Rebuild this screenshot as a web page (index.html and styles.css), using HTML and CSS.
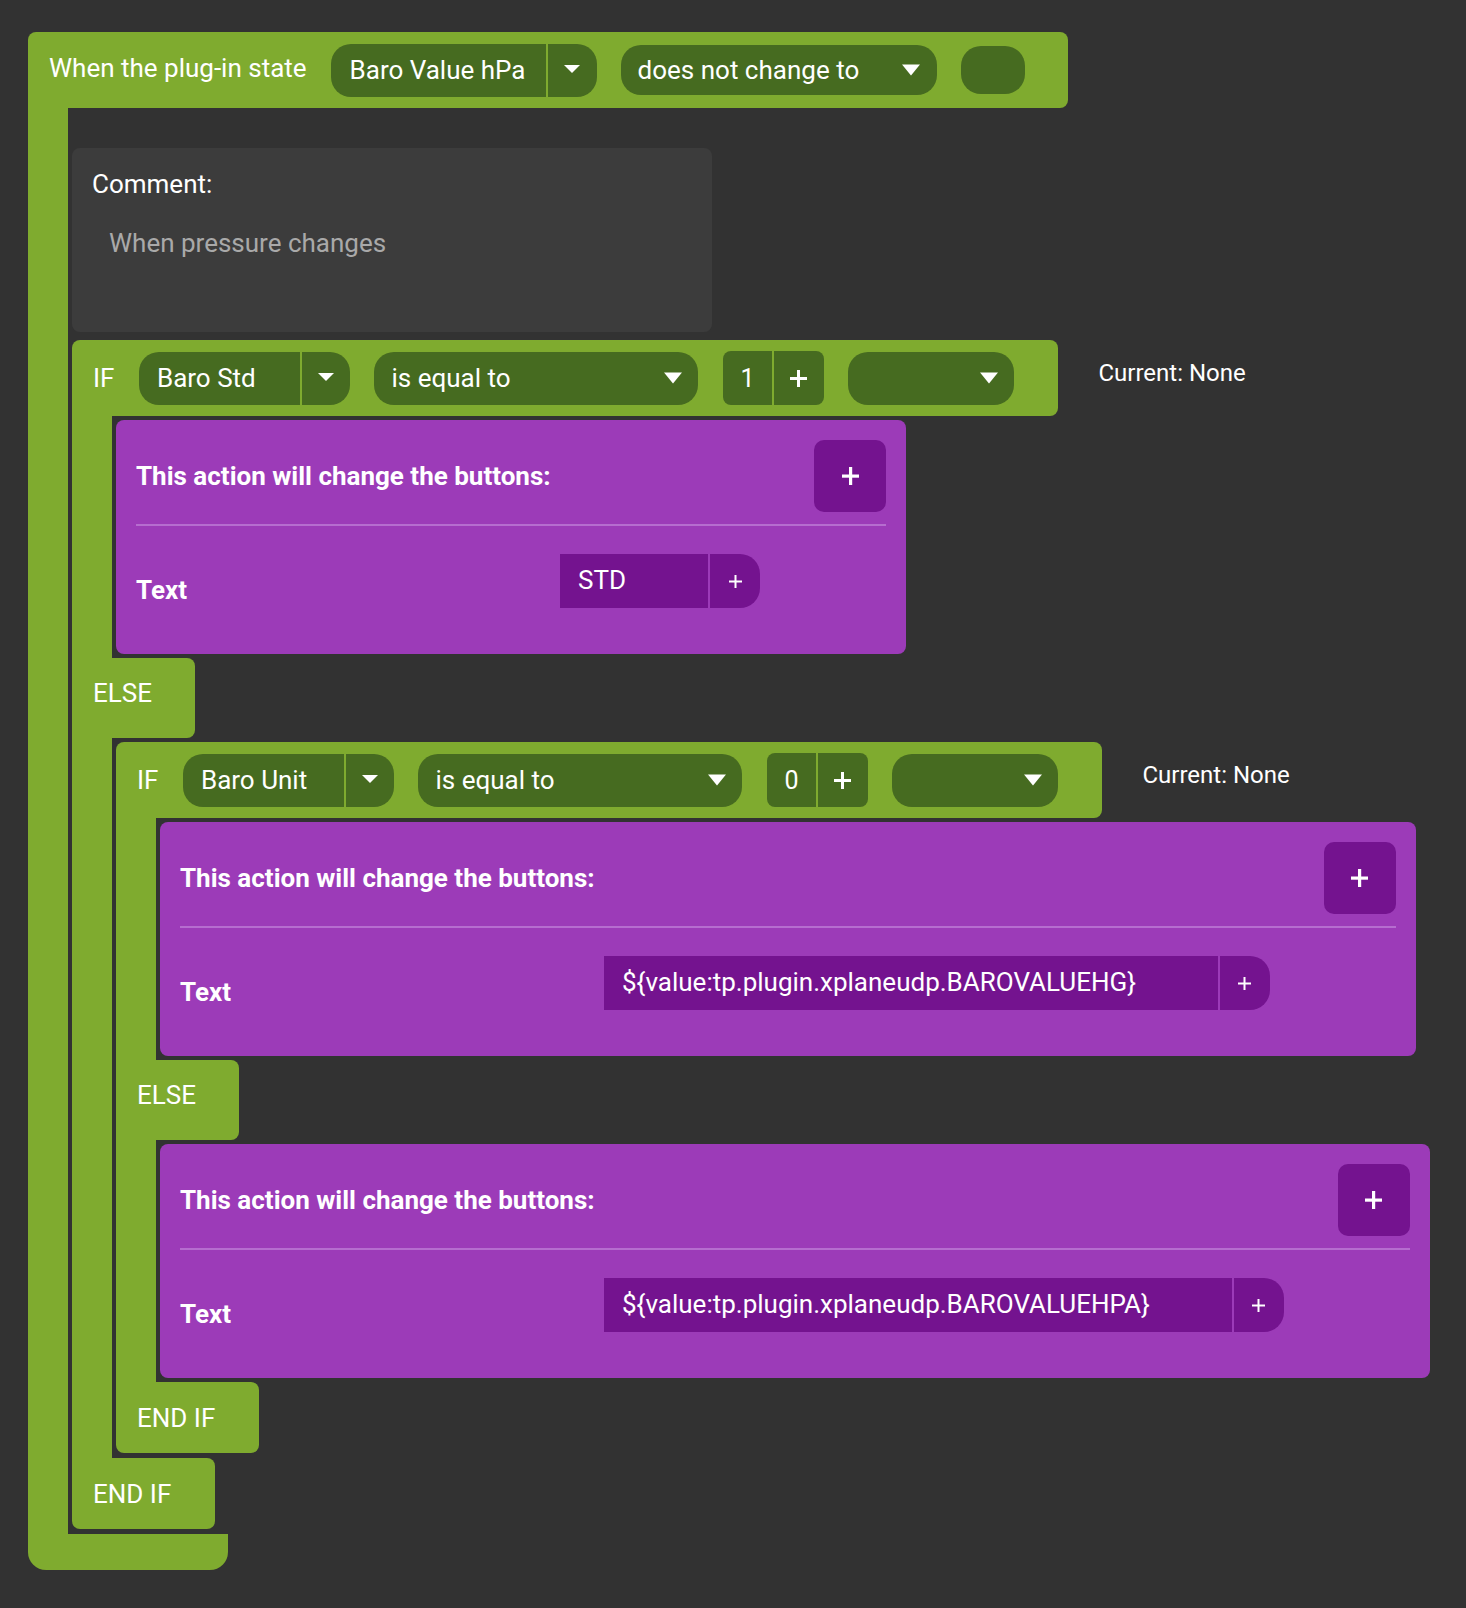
FILE: index.html
```html
<!DOCTYPE html>
<html lang="en">
<head>
<meta charset="utf-8">
<title>Plug-in state event</title>
<link rel="stylesheet" href="styles.css">
</head>
<body>
<div class="page">
  <div class="when-block">
    <div class="when-head">
      <span class="label head-label">When the plug-in state</span>
      <div class="sel sel-split w-hpa">
        <span class="sel-text">Baro Value hPa</span>
        <span class="sel-arrow"><svg class="soft" width="20" height="12" viewBox="0 0 20 12"><polygon points="2,2 18,2 10,10" fill="#fff"/></svg></span>
      </div>
      <div class="sel sel-plain w-change">
        <span class="sel-text">does not change to</span>
        <svg width="18" height="12" viewBox="0 0 18 12"><polygon points="0,0.5 18,0.5 9,11.5" fill="#fff"/></svg>
      </div>
      <div class="val-box"></div>
    </div>

    <div class="when-body">
      <div class="comment">
        <div class="label">Comment:</div>
        <div class="comment-text">When pressure changes</div>
      </div>

      <div class="if-block">
        <div class="if-row">
          <div class="if-head">
            <span class="label">IF</span>
            <div class="sel sel-split w-std">
              <span class="sel-text">Baro Std</span>
              <span class="sel-arrow"><svg class="soft" width="20" height="12" viewBox="0 0 20 12"><polygon points="2,2 18,2 10,10" fill="#fff"/></svg></span>
            </div>
            <div class="sel sel-plain w-op">
              <span class="sel-text">is equal to</span>
              <svg width="18" height="12" viewBox="0 0 18 12"><polygon points="0,0.5 18,0.5 9,11.5" fill="#fff"/></svg>
            </div>
            <div class="num">
              <span class="num-val">1</span>
              <span class="num-plus"><svg width="17" height="17" viewBox="0 0 17 17"><rect x="7" y="0" width="3" height="17" fill="#fff"/><rect x="0" y="7" width="17" height="3" fill="#fff"/></svg></span>
            </div>
            <div class="sel sel-plain w-empty">
              <span class="sel-text"></span>
              <svg width="18" height="12" viewBox="0 0 18 12"><polygon points="0,0.5 18,0.5 9,11.5" fill="#fff"/></svg>
            </div>
          </div>
          <div class="current">Current: None</div>
        </div>

        <div class="branch">
          <div class="action">
            <div class="action-head">
              <span class="action-title">This action will change the buttons:</span>
              <div class="add-btn"><svg width="17" height="18" viewBox="0 0 17 18"><rect x="7" y="0" width="3.2" height="18" fill="#fff"/><rect x="0" y="7.5" width="17" height="3.2" fill="#fff"/></svg></div>
            </div>
            <div class="action-sep"></div>
            <div class="action-row">
              <span class="action-label">Text</span>
              <div class="txt-input">
                <span class="txt-val">STD</span>
                <span class="txt-plus"><svg width="13" height="13" viewBox="0 0 13 13"><rect x="5.5" y="0" width="2" height="13" fill="#fff"/><rect x="0" y="5.5" width="13" height="2" fill="#fff"/></svg></span>
              </div>
            </div>
          </div>
        </div>

        <div class="else-tab"><span class="label">ELSE</span></div>

        <div class="branch branch-last">
          <div class="if-block">
            <div class="if-row">
              <div class="if-head">
                <span class="label">IF</span>
                <div class="sel sel-split w-std">
                  <span class="sel-text">Baro Unit</span>
                  <span class="sel-arrow"><svg class="soft" width="20" height="12" viewBox="0 0 20 12"><polygon points="2,2 18,2 10,10" fill="#fff"/></svg></span>
                </div>
                <div class="sel sel-plain w-op">
                  <span class="sel-text">is equal to</span>
                  <svg width="18" height="12" viewBox="0 0 18 12"><polygon points="0,0.5 18,0.5 9,11.5" fill="#fff"/></svg>
                </div>
                <div class="num">
                  <span class="num-val">0</span>
                  <span class="num-plus"><svg width="17" height="17" viewBox="0 0 17 17"><rect x="7" y="0" width="3" height="17" fill="#fff"/><rect x="0" y="7" width="17" height="3" fill="#fff"/></svg></span>
                </div>
                <div class="sel sel-plain w-empty">
                  <span class="sel-text"></span>
                  <svg width="18" height="12" viewBox="0 0 18 12"><polygon points="0,0.5 18,0.5 9,11.5" fill="#fff"/></svg>
                </div>
              </div>
              <div class="current">Current: None</div>
            </div>

            <div class="branch">
              <div class="action">
                <div class="action-head">
                  <span class="action-title">This action will change the buttons:</span>
                  <div class="add-btn"><svg width="17" height="18" viewBox="0 0 17 18"><rect x="7" y="0" width="3.2" height="18" fill="#fff"/><rect x="0" y="7.5" width="17" height="3.2" fill="#fff"/></svg></div>
                </div>
                <div class="action-sep"></div>
                <div class="action-row">
                  <span class="action-label">Text</span>
                  <div class="txt-input">
                    <span class="txt-val">${value:tp.plugin.xplaneudp.BAROVALUEHG}</span>
                    <span class="txt-plus"><svg width="13" height="13" viewBox="0 0 13 13"><rect x="5.5" y="0" width="2" height="13" fill="#fff"/><rect x="0" y="5.5" width="13" height="2" fill="#fff"/></svg></span>
                  </div>
                </div>
              </div>
            </div>

            <div class="else-tab"><span class="label">ELSE</span></div>

            <div class="branch">
              <div class="action">
                <div class="action-head">
                  <span class="action-title">This action will change the buttons:</span>
                  <div class="add-btn"><svg width="17" height="18" viewBox="0 0 17 18"><rect x="7" y="0" width="3.2" height="18" fill="#fff"/><rect x="0" y="7.5" width="17" height="3.2" fill="#fff"/></svg></div>
                </div>
                <div class="action-sep"></div>
                <div class="action-row">
                  <span class="action-label">Text</span>
                  <div class="txt-input">
                    <span class="txt-val">${value:tp.plugin.xplaneudp.BAROVALUEHPA}</span>
                    <span class="txt-plus"><svg width="13" height="13" viewBox="0 0 13 13"><rect x="5.5" y="0" width="2" height="13" fill="#fff"/><rect x="0" y="5.5" width="13" height="2" fill="#fff"/></svg></span>
                  </div>
                </div>
              </div>
            </div>

            <div class="end-tab"><span class="label">END IF</span></div>
          </div>
        </div>

        <div class="end-tab"><span class="label">END IF</span></div>
      </div>
    </div>

    <div class="when-foot"></div>
  </div>
</div>
</body>
</html>
```

FILE: styles.css
```css
* {
  box-sizing: border-box;
}

html, body {
  margin: 0;
  background: #323232;
}

body {
  font-family: Roboto, "Liberation Sans", Arial, sans-serif;
  color: #ffffff;
}

.page {
  padding: 32px 0 0 28px;
  min-height: 1608px;
}

.label {
  font-size: 26px;
  line-height: 30px;
  white-space: nowrap;
}

/* ---------- outer "When" block ---------- */
.when-block {
  display: flex;
  flex-direction: column;
  align-items: flex-start;
}

.when-head {
  display: flex;
  align-items: center;
  gap: 24px;
  height: 76px;
  padding: 0 43px 0 21px;
  background: #7fab2f;
  border-radius: 8px 8px 8px 0;
}

.head-label {
  margin-bottom: 5px;
}

.when-body {
  display: flex;
  flex-direction: column;
  align-items: flex-start;
  border-left: 40px solid #7fab2f;
  padding: 40px 0 5px 4px;
}

.when-foot {
  width: 200px;
  height: 36px;
  background: #7fab2f;
  border-radius: 0 0 18px 18px;
}

/* ---------- selects ---------- */
.sel {
  display: flex;
  align-items: center;
  height: 53px;
  background: #466b20;
  border-radius: 20px;
  font-size: 26px;
  line-height: 30px;
  white-space: nowrap;
}

.sel-split .sel-text {
  height: 100%;
  display: flex;
  align-items: center;
  padding-left: 19px;
  border-right: 2px solid #7fab2f;
}

.sel-arrow {
  flex: 1;
  height: 100%;
  display: flex;
  align-items: center;
  justify-content: center;
}

.sel-arrow .soft {
  filter: blur(0.6px);
  margin-top: -2px;
}

.sel-plain {
  justify-content: space-between;
  padding: 0 16px 0 17px;
}

.w-hpa {
  width: 266px;
}

.w-hpa .sel-text {
  width: 217px;
}

.w-std {
  width: 211px;
  padding-left: 0;
}

.w-std .sel-text {
  width: 163px;
  padding-left: 18px;
}

.w-change {
  width: 316px;
  height: 50px;
  padding-right: 17px;
}

.w-op {
  width: 324px;
}

.w-empty {
  width: 166px;
}

.val-box {
  width: 64px;
  height: 48px;
  background: #466b20;
  border-radius: 20px;
}

.num {
  display: flex;
  width: 101px;
  height: 54px;
  background: #466b20;
  border-radius: 8px;
}

.num-val {
  width: 51px;
  border-right: 2px solid #7fab2f;
  display: flex;
  align-items: center;
  justify-content: center;
  font-size: 25px;
}

.num-plus {
  flex: 1;
  display: flex;
  align-items: center;
  justify-content: center;
}

/* ---------- comment ---------- */
.comment {
  width: 640px;
  height: 184px;
  margin-bottom: 8px;
  padding: 21px 20px;
  background: #3c3c3c;
  border-radius: 8px;
}

.comment-text {
  margin: 29px 0 0 17px;
  font-size: 26px;
  line-height: 30px;
  color: #a9a9a9;
}

/* ---------- IF blocks ---------- */
.if-block {
  display: flex;
  flex-direction: column;
  align-items: flex-start;
}

.if-row {
  display: flex;
  align-items: flex-start;
}

.if-head {
  display: flex;
  align-items: center;
  gap: 24.5px;
  height: 76px;
  padding: 0 44px 0 21px;
  background: #7fab2f;
  border-radius: 8px 8px 8px 0;
}

.current {
  margin: 19px 0 0 40px;
  font-size: 24px;
  line-height: 28px;
  white-space: nowrap;
}

.branch {
  display: flex;
  flex-direction: column;
  align-items: flex-start;
  border-left: 40px solid #7fab2f;
  padding: 4px 0 4px 4px;
}

.branch-last {
  padding-bottom: 5px;
}

.else-tab {
  width: 123px;
  height: 80px;
  padding: 20px 0 0 21px;
  background: #7fab2f;
  border-radius: 0 8px 8px 0;
}

.end-tab {
  display: flex;
  align-items: center;
  width: 143px;
  height: 71px;
  padding-left: 21px;
  background: #7fab2f;
  border-radius: 0 8px 8px 8px;
}

/* ---------- action blocks ---------- */
.action {
  display: flex;
  flex-direction: column;
  padding: 20px 20px 46px 20px;
  background: #9c3bb8;
  border-radius: 8px;
}

.action-head {
  display: flex;
  align-items: center;
  justify-content: space-between;
  height: 72px;
}

.action-title {
  font-size: 26px;
  line-height: 30px;
  font-weight: 700;
  white-space: nowrap;
}

.add-btn {
  width: 72px;
  height: 72px;
  display: flex;
  align-items: center;
  justify-content: center;
  background: #74138f;
  border-radius: 10px;
}

.action-sep {
  height: 2px;
  margin: 12px 0 28px;
  background: #b66dcf;
}

.action-row {
  display: flex;
  align-items: flex-start;
  padding-right: 126px;
}

.action-label {
  width: 424px;
  flex-shrink: 0;
  padding-top: 21px;
  font-size: 26px;
  line-height: 30px;
  font-weight: 700;
}

.txt-input {
  display: flex;
  height: 54px;
}

.txt-val {
  display: flex;
  align-items: center;
  padding: 0 82px 2px 18px;
  background: #74138f;
  border-right: 2px solid #9c3bb8;
  font-size: 26px;
  line-height: 30px;
  white-space: nowrap;
}

.txt-plus {
  width: 50px;
  display: flex;
  align-items: center;
  justify-content: center;
  background: #74138f;
  border-radius: 0 20px 20px 0;
}
```
